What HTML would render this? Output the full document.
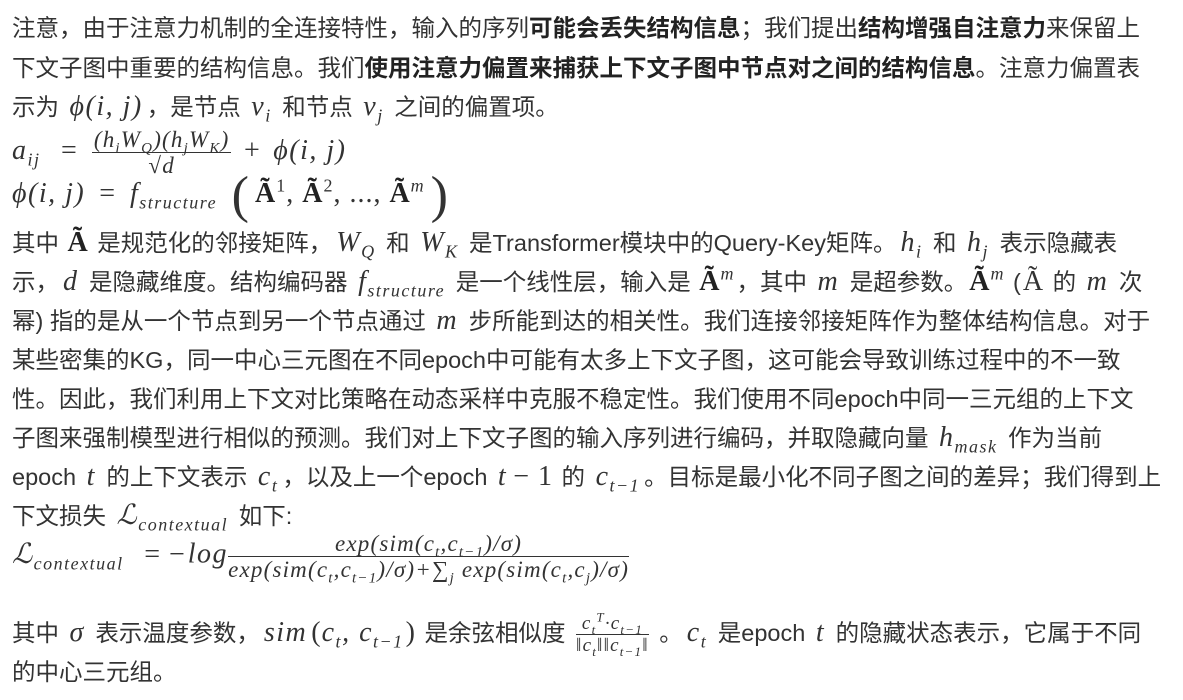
<!DOCTYPE html>
<html><head><meta charset="utf-8"><style>
body{margin:0;background:#fff;width:1183px;height:700px;overflow:hidden;position:relative;}
.l{position:absolute;left:12px;white-space:nowrap;font-family:"Liberation Sans","Noto Sans CJK SC",sans-serif;font-size:23.5px;line-height:40px;color:#333;}
b{font-weight:bold;color:#222}
.m{font-family:"Liberation Serif","DejaVu Serif",serif;font-style:italic;font-size:28px;letter-spacing:1.5px;margin:0 4px;}
.r{font-family:"Liberation Serif","DejaVu Serif",serif;font-style:normal;font-size:28px;letter-spacing:1px;margin:0 2px;}
sub,sup{font-size:18px;line-height:0;}
.fr{display:inline-block;vertical-align:middle;text-align:center;font-family:"Liberation Serif",serif;font-style:italic;font-size:23px;line-height:25px;letter-spacing:1.2px;margin:0 4px;}
.fr sub,.fr sup{font-size:15px;}
.fr .n{border-bottom:1px solid #333;padding:0 2px;}
.big{font-size:52px;font-family:"Liberation Serif",serif;vertical-align:middle;font-style:normal;line-height:0;margin:0 4px;}
</style></head><body>
<div class="l" style="top:8px">注意，由于注意力机制的全连接特性，输入的序列<b>可能会丢失结构信息</b>；我们提出<b>结构增强自注意力</b>来保留上</div>
<div class="l" style="top:48px">下文子图中重要的结构信息。我们<b>使用注意力偏置来捕获上下文子图中节点对之间的结构信息</b>。注意力偏置表</div>
<div class="l" style="top:87px">示为 <span class="m">ϕ(i, j)</span>，是节点 <span class="m">v<sub>i</sub></span> 和节点 <span class="m">v<sub>j</sub></span> 之间的偏置项。</div>
<div class="l" style="top:127px"><span class="m" style="margin-left:0">a<sub>ij</sub></span> <span class="r">&nbsp;=&nbsp;</span><span class="fr"><div class="n">(h<sub>i</sub>W<sub>Q</sub>)(h<sub>j</sub>W<sub>K</sub>)</div><div style="font-style:normal">√<i>d</i></div></span> <span class="r">+</span> <span class="m">ϕ(i, j)</span></div>
<div class="l" style="top:174px"><span class="m" style="margin-left:0">ϕ(i, j)</span><span class="r"> = </span><span class="m">f<sub>structure</sub></span> <span class="big">(</span><span class="r"><b>Ã</b><sup>1</sup>, <b>Ã</b><sup>2</sup>, ..., <b>Ã</b><sup><i>m</i></sup></span><span class="big">)</span></div>
<div class="l" style="top:223px">其中 <span class="r"><b>Ã</b></span> 是规范化的邻接矩阵，<span class="m">W<sub>Q</sub></span> 和 <span class="m">W<sub>K</sub></span> 是Transformer模块中的Query-Key矩阵。<span class="m">h<sub>i</sub></span> 和 <span class="m">h<sub>j</sub></span> 表示隐藏表</div>
<div class="l" style="top:262px">示，<span class="m">d</span> 是隐藏维度。结构编码器 <span class="m">f<sub>structure</sub></span> 是一个线性层，输入是 <span class="r"><b>Ã</b><sup><i>m</i></sup></span>，其中 <span class="m">m</span> 是超参数。<span class="r"><b>Ã</b><sup><i>m</i></sup></span> (<span class="r">Ã</span> 的 <span class="m">m</span> 次</div>
<div class="l" style="top:301px">幂) 指的是从一个节点到另一个节点通过 <span class="m">m</span> 步所能到达的相关性。我们连接邻接矩阵作为整体结构信息。对于</div>
<div class="l" style="top:340px">某些密集的KG，同一中心三元图在不同epoch中可能有太多上下文子图，这可能会导致训练过程中的不一致</div>
<div class="l" style="top:379px">性。因此，我们利用上下文对比策略在动态采样中克服不稳定性。我们使用不同epoch中同一三元组的上下文</div>
<div class="l" style="top:418px">子图来强制模型进行相似的预测。我们对上下文子图的输入序列进行编码，并取隐藏向量 <span class="m">h<sub>mask</sub></span> 作为当前</div>
<div class="l" style="top:457px">epoch <span class="m">t</span> 的上下文表示 <span class="m">c<sub>t</sub></span>，以及上一个epoch <span class="m">t</span><span class="r">− 1</span> 的 <span class="m">c<sub>t−1</sub></span>。目标是最小化不同子图之间的差异；我们得到上</div>
<div class="l" style="top:496px">下文损失 <span class="m">ℒ<sub>contextual</sub></span> 如下:</div>
<div class="l" style="top:531px"><span class="m" style="margin-left:0">ℒ<sub>contextual</sub></span> <span class="r">&nbsp;= −</span><span class="m" style="margin:0">log</span><span class="fr" style="margin-left:0"><div class="n">exp(sim(c<sub>t</sub>,c<sub>t−1</sub>)/σ)</div><div>exp(sim(c<sub>t</sub>,c<sub>t−1</sub>)/σ)+∑<sub>j</sub> exp(sim(c<sub>t</sub>,c<sub>j</sub>)/σ)</div></span></div>
<div class="l" style="top:613px">其中 <span class="m">σ</span> 表示温度参数，<span class="m">sim</span><span class="r" style="margin:0">(</span><span class="m" style="margin:0">c<sub>t</sub>, c<sub>t−1</sub></span><span class="r">)</span> 是余弦相似度 <span class="fr" style="font-size:19px;line-height:21px"><div class="n">c<sub style="font-size:13px">t</sub><sup style="font-size:13px">T</sup>·c<sub style="font-size:13px">t−1</sub></div><div>‖c<sub style="font-size:13px">t</sub>‖‖c<sub style="font-size:13px">t−1</sub>‖</div></span> 。<span class="m">c<sub>t</sub></span> 是epoch <span class="m">t</span> 的隐藏状态表示，它属于不同</div>
<div class="l" style="top:652px">的中心三元组。</div>
</body></html>
